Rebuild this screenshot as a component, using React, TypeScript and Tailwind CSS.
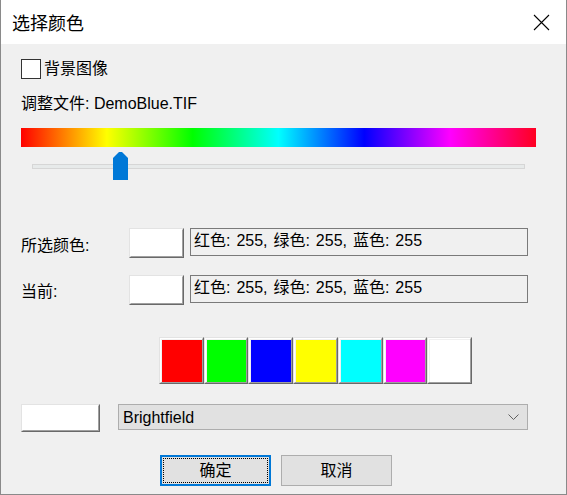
import React from "react";

const FONT = { fontFamily: '"Liberation Sans", "Noto Sans CJK SC", sans-serif' };

function Raised({ w, h, fill, pad }: { w: string; h: string; fill: string; pad?: boolean }) {
  return (
    <div
      className={`${w} ${h} flex border border-t-[#e3e3e3] border-l-[#e3e3e3] border-b-[#696969] border-r-[#696969]`}
    >
      <div className="flex-1 flex border border-t-white border-l-white border-b-[#a0a0a0] border-r-[#a0a0a0]">
        <div className={`flex-1 ${pad ? "border-t border-l border-[#f0f0f0]" : ""}`} style={{ background: fill }} />
      </div>
    </div>
  );
}

const swatches = ["#ff0000", "#00ff00", "#0000ff", "#ffff00", "#00ffff", "#ff00ff", "#ffffff"];

export default function App() {
  return (
    <div
      className="w-[567px] h-[495px] flex flex-col bg-[#f0f0f0] border-x border-b border-[#8a8a8a] text-black text-[16px] overflow-hidden"
      style={FONT}
    >
      {/* title bar */}
      <div className="h-[44px] shrink-0 bg-white flex items-center justify-between pl-[11px] pr-[16px]">
        <span className="text-[18px] leading-[24px]" style={{ fontFamily: '"Noto Sans CJK SC", sans-serif' }}>
          选择颜色
        </span>
        <svg width="17" height="17" viewBox="0 0 17 17">
          <path d="M1 1 L16 16 M16 1 L1 16" stroke="#000" strokeWidth="1.1" fill="none" />
        </svg>
      </div>

      {/* checkbox */}
      <div className="mt-[15px] h-[20px] flex items-center pl-[20px]">
        <div className="w-[20px] h-[20px] bg-white border border-[#333333]" />
        <span className="ml-[3px] leading-[20px]">背景图像</span>
      </div>

      {/* file */}
      <div className="mt-[15px] h-[20px] pl-[20px] leading-[20px]">调整文件: DemoBlue.TIF</div>

      {/* hue gradient */}
      <div className="mt-[14px] ml-[20px] w-[515px] h-[19px] bg-[linear-gradient(to_right,#ff0000,#ffff00,#00ff00,#00ffff,#0000ff,#ff00ff,#ff0020)]" />

      {/* slider */}
      <div className="mt-[5px] h-[28px] relative">
        <div className="absolute left-[31px] top-[12px] w-[493px] h-[5px] bg-[#e7eaea] border border-[#d6d6d6]" />
        <svg className="absolute left-[112px] top-0" width="15" height="28" viewBox="0 0 15 28">
          <polygon points="0,6 6,0 9,0 15,6 15,28 0,28" fill="#0078d7" />
        </svg>
      </div>

      {/* selected colour */}
      <div className="mt-[48px] h-[30px] flex pl-[20px]">
        <div className="w-[108px] flex items-center pt-[6px] leading-[20px]">所选颜色:</div>
        <Raised w="w-[55px]" h="h-[30px]" fill="#ffffff" />
        <div className="ml-[6px] w-[338px] h-[28px] border border-[#7a7a7a] pl-[3px] pt-[2px] leading-[20px] [word-spacing:1.5px]">
          红色: 255, 绿色: 255, 蓝色: 255
        </div>
      </div>

      {/* current */}
      <div className="mt-[17px] h-[30px] flex pl-[20px]">
        <div className="w-[108px] flex items-center pt-[3px] leading-[20px]">当前:</div>
        <Raised w="w-[55px]" h="h-[30px]" fill="#ffffff" />
        <div className="ml-[6px] w-[338px] h-[28px] border border-[#7a7a7a] pl-[3px] pt-[2px] leading-[20px] [word-spacing:1.5px]">
          红色: 255, 绿色: 255, 蓝色: 255
        </div>
      </div>

      {/* swatches */}
      <div className="mt-[32px] ml-[158px] w-[313px] h-[47px] flex">
        {swatches.map((c) => (
          <div key={c} className="flex-1 flex">
            <Raised w="flex-1" h="h-[47px]" fill={c} pad />
          </div>
        ))}
      </div>

      {/* combo row */}
      <div className="mt-[20px] h-[28px] flex pl-[20px]">
        <Raised w="w-[79px]" h="h-[28px]" fill="#ffffff" />
        <div className="ml-[18px] w-[410px] h-[26px] bg-[#e1e1e1] border border-[#adadad] flex items-center justify-between pl-[4px] pr-[7px]">
          <span className="leading-[20px] pt-[2px]">Brightfield</span>
          <svg width="12" height="7" viewBox="0 0 12 7">
            <polyline points="0.5,0.5 5.5,5.5 10.5,0.5" fill="none" stroke="#606060" strokeWidth="1" />
          </svg>
        </div>
      </div>

      {/* buttons */}
      <div className="mt-[23px] h-[31px] flex pl-[159px]">
        <div className="w-[111px] h-[31px] border-2 border-[#0078d7] bg-[#e1e1e1] flex">
          <div className="flex-1 m-[1px] border border-dotted border-black flex items-center justify-center leading-[20px]">
            确定
          </div>
        </div>
        <div className="ml-[10px] w-[111px] h-[31px] border border-[#adadad] bg-[#e1e1e1] flex items-center justify-center leading-[20px]">
          取消
        </div>
      </div>
    </div>
  );
}
